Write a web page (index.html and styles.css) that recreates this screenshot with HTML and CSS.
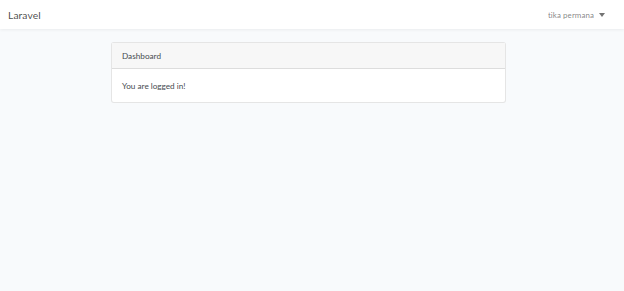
FILE: index.html
```html
<!DOCTYPE html>
<html lang="en">
<head>
    <meta charset="UTF-8">
    <meta name="viewport" content="width=device-width, initial-scale=1.0">
    <title>Laravel</title>
    <link rel="stylesheet" href="styles.css">
</head>
<body>

<nav class="navbar">
    <a class="brand" href="#">Laravel</a>
    <a class="user" href="#">tika permana <span class="caret"></span></a>
</nav>

<main class="content">
    <div class="card">
        <div class="card-header">Dashboard</div>
        <div class="card-body">You are logged in!</div>
    </div>
</main>

</body>
</html>
```

FILE: styles.css
```css
* {
    box-sizing: border-box;
}

body {
    margin: 0;
    background: #f8fafc;
    font-family: 'Lato', 'Open Sans', sans-serif;
    color: #464b50;
    height: 291px;
}

.navbar {
    height: 29px;
    background: #fff;
    box-shadow: 0 1px 3px rgba(0, 0, 0, 0.06);
    display: flex;
    align-items: center;
    justify-content: space-between;
    padding: 0 19px 0 8px;
}

.brand {
    color: rgba(0, 0, 0, 0.72);
    text-decoration: none;
    font-size: 10.3px;
    letter-spacing: 0.1px;
    padding-top: 1px;
}

.user {
    color: rgba(0, 0, 0, 0.5);
    text-decoration: none;
    font-size: 7.9px;
    letter-spacing: 0.1px;
    display: flex;
    align-items: center;
}

.caret {
    display: inline-block;
    margin-left: 5px;
    border-top: 4px solid rgba(0, 0, 0, 0.55);
    border-left: 3px solid transparent;
    border-right: 3px solid transparent;
}

.content {
    display: flex;
    justify-content: center;
    padding-top: 13px;
    padding-right: 7px;
}

.card {
    width: 395px;
    background: #fff;
    border: 1px solid rgba(0, 0, 0, 0.1);
    border-radius: 3px;
}

.card-header {
    height: 26px;
    background: #f7f7f7;
    border-bottom: 1px solid rgba(0, 0, 0, 0.1);
    display: flex;
    align-items: center;
    padding-left: 10px;
    font-size: 8.2px;
}

.card-body {
    height: 33px;
    display: flex;
    align-items: center;
    padding-left: 10px;
    font-size: 8.2px;
}
```
